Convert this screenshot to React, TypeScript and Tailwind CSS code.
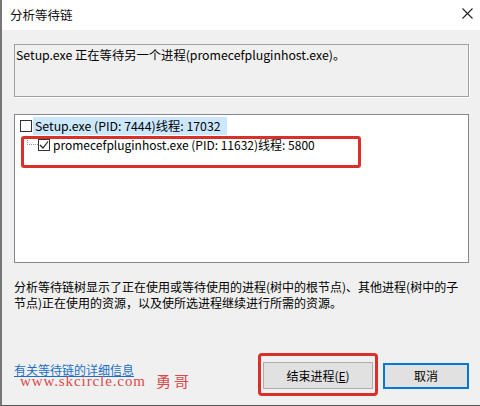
import React from "react";

function CheckBox({ checked }: { checked?: boolean }) {
  return (
    <div className="w-[12px] h-[12px] border border-[#333] bg-white flex items-center justify-center shrink-0">
      {checked && (
        <svg width="10" height="10" viewBox="0 0 10 10">
          <path d="M1 5 L4 8 L9 1.5" fill="none" stroke="#222" strokeWidth="1.2" />
        </svg>
      )}
    </div>
  );
}

export default function App() {
  return (
    <div className="w-[480px] h-[406px] bg-[#f0f0f0] relative overflow-hidden font-['Noto_Sans_CJK_SC',sans-serif] text-[12px] text-black border-l-2 border-l-[#777] border-b border-b-[#555] flex flex-col">
      {/* title bar */}
      <div className="h-[30px] bg-white flex items-center pl-[8px] shrink-0 relative">
        <span className="text-[12.5px] text-[#111]">分析等待链</span>
        <svg className="absolute left-[460px] top-[8px]" width="11" height="11" viewBox="0 0 11 11">
          <path d="M0.5 0.5 L10.5 10.5 M10.5 0.5 L0.5 10.5" stroke="#222" strokeWidth="1.1" />
        </svg>
      </div>

      <div className="pl-[12px] pr-[10px] flex flex-col flex-1">
        {/* info box */}
        <div className="mt-[14px] h-[53px] w-[455px] border border-[#a0a0a0] shadow-[1px_1px_0_#fff] pl-[1px] pt-[2px] leading-[16px] text-[12.3px]">
          Setup.exe 正在等待另一个进程(promecefpluginhost.exe)。
        </div>

        {/* tree box */}
        <div className="mt-[17px] h-[149px] w-[455px] border border-[#828790] bg-white relative pt-[2px]">
          <div className="flex items-center h-[18px] pl-[5px]">
            <CheckBox />
            <span className="ml-[1px] pl-[2px] pr-[6px] bg-[#cce8ff] leading-[18px] text-[12.3px]">
              Setup.exe (PID: 7444)线程: 17032
            </span>
          </div>
          <div className="flex items-center h-[20px] pl-[12px] relative">
            <div className="w-[11px] h-[8px] border-l border-b border-dotted border-[#999] -mt-[8px]" />
            <CheckBox checked />
            <span className="ml-[3px] leading-[18px] text-[12px]">
              promecefpluginhost.exe (PID: 11632)线程: 5800
            </span>
          </div>
          {/* red highlight */}
          <div className="absolute left-[6px] top-[21px] w-[340px] h-[32px] border-[3px] border-[#d9302c] rounded-[3px]" />
        </div>

        {/* description */}
        <div className="mt-[16px] leading-[16px] w-[448px]">
          分析等待链树显示了正在使用或等待使用的进程(树中的根节点)、其他进程(树中的子节点)正在使用的资源，以及使所选进程继续进行所需的资源。
        </div>

        {/* bottom row */}
        <div className="mt-auto mb-[16px] flex items-center h-[27px] relative">
          <span className="text-[#1a6fc4] underline leading-[13px] -mt-[12px]">有关等待链的详细信息</span>
          <div className="ml-auto flex items-center gap-[10px] mr-[1px]">
            <div className="relative">
              <div className="w-[110px] h-[27px] bg-[#e1e1e1] border border-[#adadad] flex items-center justify-center">
                结束进程(<span className="underline">E</span>)
              </div>
              <div className="absolute -left-[5px] -top-[9px] w-[120px] h-[43px] border-[3px] border-[#d9302c] rounded-[4px]" />
            </div>
            <div className="w-[86px] h-[26px] bg-[#e1e1e1] border-2 border-[#0078d7] flex items-center justify-center">
              取消
            </div>
          </div>
        </div>
      </div>

      {/* watermark */}
      <div className="absolute left-[18px] top-[374px] flex items-center text-[#d94a4a] leading-[14px]">
        <span className="font-['Liberation_Serif',serif] text-[15px] tracking-[0.9px] leading-[14px]">www.skcircle.com</span>
        <span className="ml-[10px] text-[15px] tracking-[3px] leading-[14px]">勇哥</span>
      </div>
    </div>
  );
}
